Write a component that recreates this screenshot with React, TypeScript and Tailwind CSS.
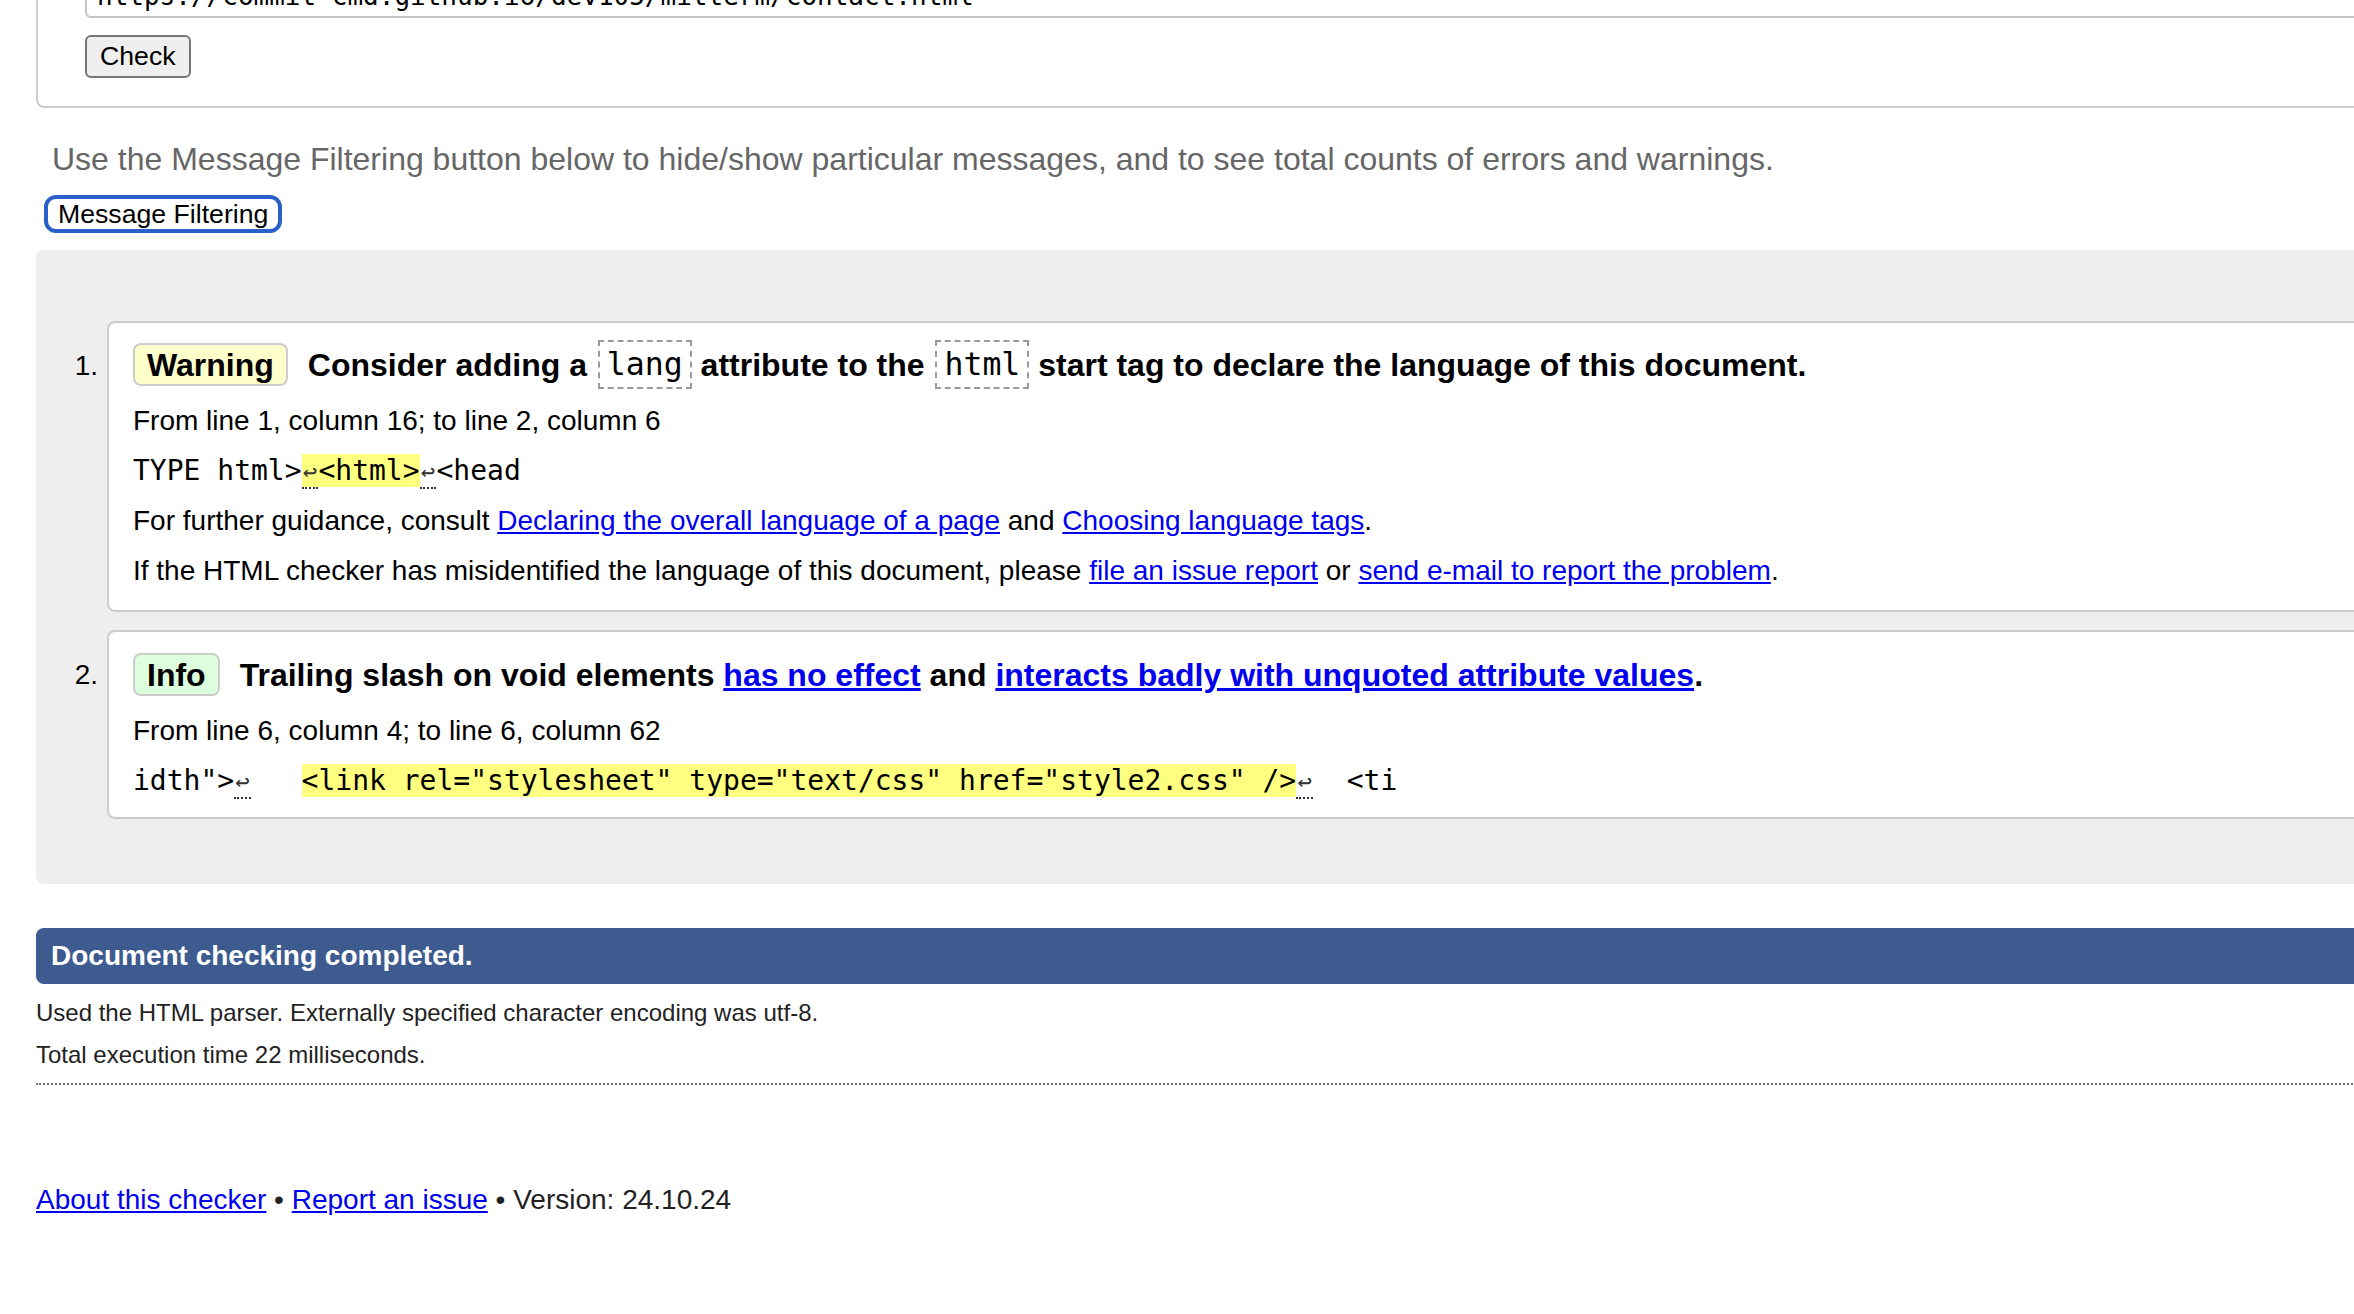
import React from "react";

const mono = "font-['DejaVu_Sans_Mono',monospace]";

function Lf() {
  return (
    <span className="border-b-2 border-dotted border-[#333]">
      <span className="inline-block w-[16.86px] text-[24px] text-center text-[#333]">↩</span>
    </span>
  );
}

function Code({ children }: { children: React.ReactNode }) {
  return (
    <code
      className={`inline-flex items-center h-[49px] px-[7px] border-2 border-dashed border-[#9a9a9a] font-normal text-[31.5px] ${mono}`}
    >
      {children}
    </code>
  );
}

function A({ children, bold }: { children: React.ReactNode; bold?: boolean }) {
  return (
    <a href="#" className={`text-[#0000ee] underline ${bold ? "font-bold" : ""}`}>
      {children}
    </a>
  );
}

export default function App() {
  return (
    <div className="w-[2354px] h-[1314px] overflow-hidden bg-white text-black font-['Liberation_Sans',Arial,sans-serif]">
      <div className="w-[2700px] pl-[36px]">
        {/* form fieldset (scrolled partly out of view) */}
        <div className="-mt-[80px] border-2 border-[#cccccc] rounded-[8px] pt-[48px] pb-[28px] pl-[47px]">
          <div
            className={`h-[48px] border-2 border-[#c4c4c4] rounded-[6px] flex items-center pl-[10px] pt-[4px] text-[26px] ${mono}`}
          >
            https://commit-cmd.github.io/dev105/mitterm/contact.html
          </div>
          <button className="mt-[17px] h-[43px] px-[13px] text-[26.67px] leading-none bg-[#efefef] border-2 border-[#767676] rounded-[6px] text-black">
            Check
          </button>
        </div>

        <p className="mt-[32px] pl-[16px] text-[32px] leading-[38px] text-[#666666]">
          Use the Message Filtering button below to hide/show particular messages, and to see total counts of errors and warnings.
        </p>

        <button className="mt-[17px] ml-[8px] h-[38px] px-[10px] flex items-center text-[26.67px] leading-none bg-white border-[4px] border-[#2a60c9] rounded-[12px] text-black">
          Message Filtering
        </button>

        {/* results */}
        <div className="mt-[17px] bg-[#eeeeee] rounded-l-[8px] pt-[71px] pb-[65px]">
          <ol>
            <li className="flex">
              <div className="w-[71px] shrink-0 text-right pr-[9px] text-[28px] leading-[49px] pt-[20px]">1.</div>
              <div className="flex-1 bg-white border-2 border-[#cccccc] rounded-[8px] pt-[17px] pb-[14px] pl-[24px]">
                <p className="flex items-center h-[49px] text-[32px] font-bold whitespace-pre">
                  <span className="inline-flex items-center h-[43px] px-[12px] rounded-[8px] border-2 border-[#cccccc] bg-[#ffffcc]">
                    Warning
                  </span>
                  <span className="ml-[20px]">Consider adding a </span>
                  <span className="ml-[2px]" />
                  <Code>lang</Code>
                  <span> attribute to the </span>
                  <span className="ml-[2px]" />
                  <Code>html</Code>
                  <span> start tag to declare the language of this document.</span>
                </p>
                <div className="mt-[7px]">
                  <p className="h-[50px] leading-[50px] text-[28px]">From line 1, column 16; to line 2, column 6</p>
                  <p className={`h-[50px] leading-[50px] text-[28px] whitespace-pre ${mono}`}>
                    TYPE html&gt;
                    <span className="bg-[#ffff80]">
                      <Lf />
                      &lt;html&gt;
                    </span>
                    <Lf />
                    &lt;head
                  </p>
                  <p className="h-[50px] leading-[50px] text-[28px] whitespace-nowrap">
                    For further guidance, consult <A>Declaring the overall language of a page</A> and{" "}
                    <A>Choosing language tags</A>.
                  </p>
                  <p className="h-[50px] leading-[50px] text-[28px] whitespace-nowrap">
                    If the HTML checker has misidentified the language of this document, please{" "}
                    <A>file an issue report</A> or <A>send e-mail to report the problem</A>.
                  </p>
                </div>
              </div>
            </li>
            <li className="flex mt-[18px]">
              <div className="w-[71px] shrink-0 text-right pr-[9px] text-[28px] leading-[49px] pt-[20px]">2.</div>
              <div className="flex-1 bg-white border-2 border-[#cccccc] rounded-[8px] pt-[18px] pb-[11px] pl-[24px]">
                <p className="flex items-center h-[49px] text-[32px] font-bold whitespace-pre">
                  <span className="inline-flex items-center h-[43px] px-[12px] rounded-[8px] border-2 border-[#cccccc] bg-[#ddffdd]">
                    Info
                  </span>
                  <span className="ml-[20px]">Trailing slash on void elements </span>
                  <A bold>has no effect</A>
                  <span> and </span>
                  <A bold>interacts badly with unquoted attribute values</A>
                  <span>.</span>
                </p>
                <div className="mt-[7px]">
                  <p className="h-[50px] leading-[50px] text-[28px]">From line 6, column 4; to line 6, column 62</p>
                  <p className={`h-[50px] leading-[50px] text-[28px] whitespace-pre ${mono}`}>
                    idth"&gt;
                    <Lf />
                    {"   "}
                    <span className="bg-[#ffff80]">&lt;link rel="stylesheet" type="text/css" href="style2.css" /&gt;</span>
                    <Lf />
                    {"  "}&lt;ti
                  </p>
                </div>
              </div>
            </li>
          </ol>
        </div>

        <div className="mt-[44px] h-[56px] bg-[#3d5b8f] rounded-l-[8px] flex items-center pl-[15px] text-white font-bold text-[28px]">
          Document checking completed.
        </div>

        <p className="mt-[15px] h-[28px] leading-[28px] text-[24px] text-[#222222]">
          Used the HTML parser. Externally specified character encoding was utf-8.
        </p>
        <p className="mt-[14px] h-[28px] leading-[28px] text-[24px] text-[#222222]">
          Total execution time 22 milliseconds.
        </p>
        <div className="mt-[14px] border-t-2 border-dotted border-[#777777]" />

        <p className="mt-[99px] leading-[32px] text-[28px] text-[#222222]">
          <A>About this checker</A> • <A>Report an issue</A> • Version: 24.10.24
        </p>
      </div>
    </div>
  );
}
